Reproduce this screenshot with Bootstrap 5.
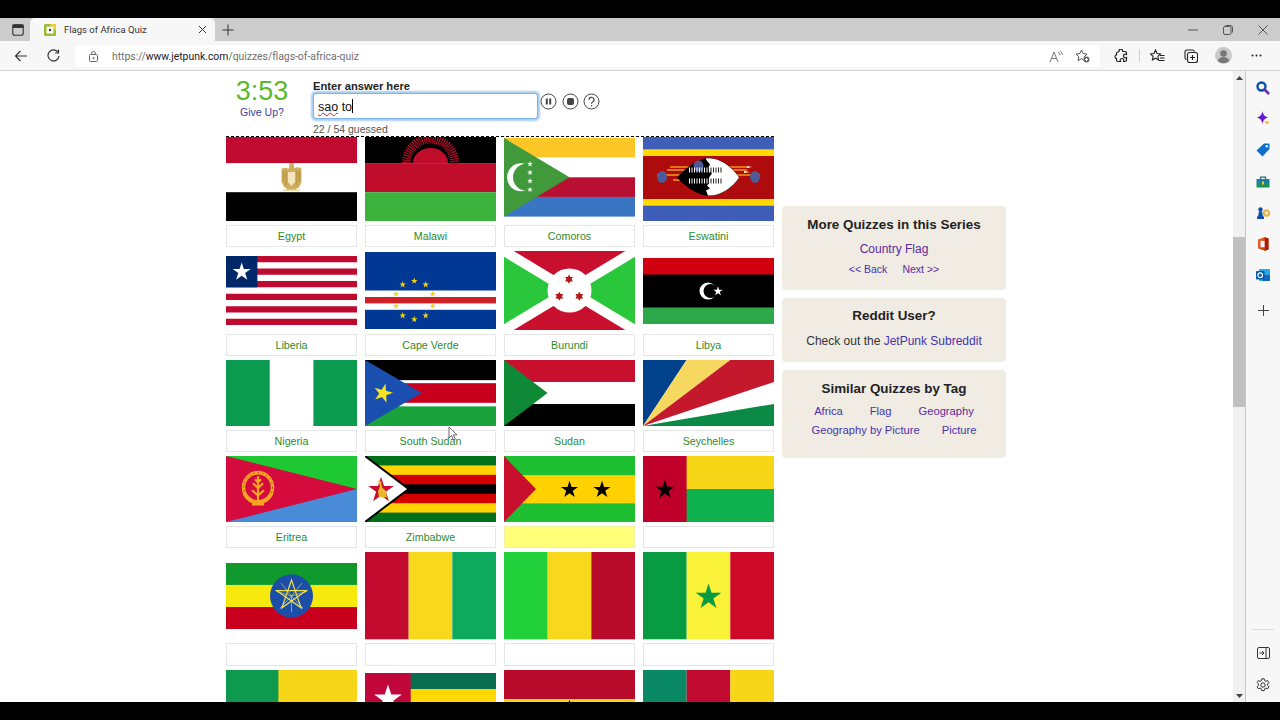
<!DOCTYPE html>
<html lang="en">
<head>
  <meta charset="UTF-8" />
  <meta name="viewport" content="width=device-width, initial-scale=1.0" />
  <title>Flags of Africa Quiz</title>
  <link href="https://cdn.jsdelivr.net/npm/bootstrap@5.3.0/dist/css/bootstrap.min.css" rel="stylesheet" />
  <style>
    html, body { height: 100%; overflow: hidden; }
    body { font-family: "Liberation Sans", Arial, sans-serif; background: #000; color: #222; }
    .black-band { height: 18px; background: #000; flex: none; }
    .tab-strip { height: 23px; background: #cccccc; flex: none; }
    .strip-ico { width: 30px; padding-left: 12px; }
    .browser-tab { width: 185px; height: 23px; background: #f7f7f7; border-radius: 5px 5px 0 0; padding: 0 8px 0 14px; font: 9.5px Roboto, sans-serif; color: #333; }
    .plus-ico { width: 26px; }
    .win-ico { width: 35px; height: 23px; }
    .tool-bar { height: 30px; background: #f7f7f7; border-bottom: 1px solid #d2d2d2; flex: none; padding-left: 4px; }
    .tool-ico { width: 33px; height: 29px; }
    .addr-bar { width: 1025px; height: 22px; margin: 1px 0 0 5px; background: #fff; border-radius: 4px; padding: 0 10px 0 14px; font: 10.4px Roboto, sans-serif; color: #6e6e6e; }
    .addr-bar b { font-weight: 400; color: #222; }
    .addr-lock { margin-right: 14px; }
    .addr-tools { gap: 12px; }
    .addr-right { width: 33px; }
    .tool-split { width: 1px; height: 13px; background: #d0d0d0; margin: 0 1px 0 2px; }
    .page-pane { background: #fff; min-width: 0; }
    .page-inner { padding-left: 226px; gap: 8px; }
    .quiz-col { width: 548px; flex: none; }
    .quiz-head { height: 66px; background: #fff; border-bottom: 1px dashed #000; z-index: 2; }
    .timer-col { width: 72px; margin-right: 15px; padding-top: 5px; text-align: center; }
    .timer-num { font-size: 27px; line-height: 30px; color: #5cb82f; }
    .give-up { font-size: 10.5px; line-height: 14px; margin-top: -1px; color: #4040a8; text-decoration: none; display: block; }
    .answer-lbl { font-size: 11.2px; font-weight: 700; line-height: 14px; padding-top: 8px; margin-bottom: 0; color: #222; }
    .answer-box.form-control { width: 225px; height: 26px; padding: 3px 4px; border: 1px solid #7fb4e6; border-radius: 3px; box-shadow: 0 0 2px 2px #a8cff0; font-size: 12.5px; line-height: 20px; color: #111; }
    .spell-mark { text-decoration: underline wavy #d02020 1px; }
    .caret-bar { display: inline-block; width: 1px; height: 14px; background: #000; vertical-align: -2px; }
    .guess-count { font-size: 10.5px; line-height: 13px; margin-top: 4px; color: #555; }
    .ctl-row { gap: 4.5px; padding-left: 2px; margin-top: 22px; }
    .flag-grid { display: grid; grid-template-columns: repeat(4, 131px); column-gap: 8px; margin-top: -3px; }
    .flag-img { display: block; width: 131px; }
    .flag-name { height: 22.4px; margin: 3.6px 0 4px; background: #fff; border: 1px solid #e6e6e6; font-size: 10.7px; color: #2e8b2e; }
    .flag-now { background: #ffff78; border-color: #f1f1a0; }
    .side-col { width: 224px; flex: none; padding-top: 135px; gap: 8px; }
    .side-panel { background: #f0ebe3; border-radius: 4px; text-align: center; color: #333; }
    .side-title { font-size: 13.4px; font-weight: 700; line-height: 16px; color: #222; margin: 0; }
    .side-panel a { text-decoration: none; color: #4535ad; }
    .side-panel a.seen { color: #5a2a9e; }
    .p-series { height: 84px; padding-top: 11px; }
    .p-reddit { height: 64px; padding-top: 10px; }
    .p-tags { height: 88px; padding-top: 11px; }
    .big-link { font-size: 12px; line-height: 14px; margin-top: 9px; }
    .small-links { font-size: 10.5px; line-height: 14px; margin-top: 6px; gap: 15px; }
    .reddit-line { font-size: 12px; line-height: 14px; margin-top: 10px; }
    .tag-line { font-size: 11.2px; line-height: 14px; gap: 27px; margin-top: 7px; }
    .tag-line + .tag-line { margin-top: 5px; gap: 22px; }
    .scroll-track { width: 12px; background: #f1f1f1; flex: none; padding-top: 166px; }
    .scroll-thumb { height: 170px; background: #c0c0c0; }
    .scroll-up { top: 5px; left: 3px; }
    .scroll-down { bottom: 4px; left: 3px; }
    .side-rail { width: 35px; flex: none; background: #f7f7f7; border-left: 1px solid #c8c8c8; padding-top: 1px; }
    .rail-ico { height: 31.3px; }
    .rail-low { height: 32px; }
    .rail-foot { padding-bottom: 1px; }
    .rail-line { width: 22px; height: 1px; background: #dcdcdc; margin-bottom: 7px; }
    .mouse-ptr { left: 448px; top: 355px; z-index: 3; }
  </style>
</head>
<body>
<svg class="d-none">
  <defs>
    <polygon id="st" points="0,-1 .2245,-.309 .951,-.309 .363,.118 .588,.809 0,.382 -.588,.809 -.363,.118 -.951,-.309 -.2245,-.309" />
    <g id="st6"><polygon points="0,-1 .866,.5 -.866,.5" /><polygon points="0,1 .866,-.5 -.866,-.5" /></g>
  </defs>
</svg>

<div class="d-flex flex-column vh-100">
  <div class="black-band"></div>

  <div class="tab-strip d-flex align-items-center">
    <div class="strip-ico d-flex">
      <svg width="12" height="12" viewBox="0 0 12 12" fill="none" stroke="#333" stroke-width="1.1"><rect x=".8" y=".8" width="10.4" height="10.4" rx="2"/><rect x="1" y="1" width="10" height="2.4" fill="#333"/></svg>
    </div>
    <div class="browser-tab d-flex align-items-center align-self-end">
      <svg width="12" height="12" viewBox="0 0 12 12" class="me-2 flex-none"><rect width="12" height="12" rx="1.5" fill="#9dbb2e"/><path d="M6 0h6v7z" fill="#f2cf2c"/><rect x="2.5" y="2.5" width="7" height="7" fill="#fff"/><circle cx="6" cy="6" r="1.2" fill="#333"/></svg>
      <span class="flex-grow-1">Flags of Africa Quiz</span>
      <svg width="9" height="9" viewBox="0 0 9 9" stroke="#333" stroke-width="1"><path d="M1 1l7 7M8 1l-7 7"/></svg>
    </div>
    <div class="plus-ico d-flex justify-content-center">
      <svg width="12" height="12" viewBox="0 0 12 12" stroke="#333" stroke-width="1"><path d="M6 .5v11M.5 6h11"/></svg>
    </div>
    <div class="ms-auto d-flex">
      <div class="win-ico d-flex align-items-center justify-content-center"><svg width="10" height="2" stroke="#555"><path d="M0 1h10"/></svg></div>
      <div class="win-ico d-flex align-items-center justify-content-center"><svg width="10" height="10" viewBox="0 0 10 10" fill="none" stroke="#555"><rect x=".5" y="1.5" width="7.5" height="8" rx="1.5"/><path d="M2.5.5h5a2 2 0 0 1 2 2v5"/></svg></div>
      <div class="win-ico d-flex align-items-center justify-content-center"><svg width="10" height="10" viewBox="0 0 10 10" stroke="#555"><path d="M.5.5l9 9M9.500.5l-9 9"/></svg></div>
    </div>
  </div>

  <div class="tool-bar d-flex align-items-center">
    <div class="tool-ico d-flex align-items-center justify-content-center">
      <svg width="14" height="12" viewBox="0 0 14 12" fill="none" stroke="#333" stroke-width="1.2"><path d="M13 6H1.500M6.500 1l-5 5 5 5"/></svg>
    </div>
    <div class="tool-ico d-flex align-items-center justify-content-center">
      <svg width="13" height="13" viewBox="0 0 13 13" fill="none" stroke="#333" stroke-width="1.2"><path d="M11.200 3.500A5.500 5.500 0 1 0 12 7"/><path d="M11.500.5v3.500H8"/></svg>
    </div>
    <div class="addr-bar d-flex align-items-center">
      <svg width="9" height="11" viewBox="0 0 9 11" fill="none" stroke="#666" class="addr-lock"><rect x=".5" y="3.500" width="8" height="7" rx="1"/><path d="M2.500 3.500V2.500a2 2 0 0 1 4 0v1"/><circle cx="4.500" cy="7" r=".6" fill="#666"/></svg>
      <span>https://<b>www.jetpunk.com</b>/quizzes/flags-of-africa-quiz</span>
      <span class="ms-auto d-flex align-items-center addr-tools">
        <svg width="14" height="13" viewBox="0 0 14 13" fill="none" stroke="#777"><path d="M1 12L5 2l4 10M2.500 8.500h5"/><path d="M9 2a3 3 0 0 1 2 3M11 .8a5 5 0 0 1 2.400 4"/></svg>
        <svg width="15" height="14" viewBox="0 0 15 14" fill="none" stroke="#555"><path d="M6.500 1l1.700 3.600 3.800.5-2.800 2.700.7 3.800-3.400-1.900-3.400 1.900.7-3.800L1 5.100l3.800-.5z"/><circle cx="11.500" cy="10.500" r="3" fill="#666" stroke="none"/><path d="M10 10.500h3M11.500 9v3" stroke="#fff"/></svg>
      </span>
    </div>
    <div class="tool-ico addr-right d-flex align-items-center justify-content-center ms-1">
      <svg width="14" height="14" viewBox="0 0 14 14" fill="none" stroke="#222" stroke-width="1.200"><path d="M5 1.500a1.800 1.800 0 0 1 3.500 0c0 .5 0 1 .5 1h2c1 0 1.500.5 1.500 1.500v1.500c-2-1-3 .5-3 1.500s1 2.500 3 1.500V11c0 1-.5 1.500-1.500 1.500H9.500c1-2-.5-3-1.500-3s-2.500 1-1.500 3H4C3 12.500 2.500 12 2.500 11V9.500C.5 9.500.5 6 2.500 6V4.500c0-1 .5-1.500 1.500-1.500s1.200-.8 1-1.500z"/></svg>
    </div>
    <div class="tool-split"></div>
    <div class="tool-ico d-flex align-items-center justify-content-center">
      <svg width="15" height="14" viewBox="0 0 15 14" fill="none" stroke="#222" stroke-width="1.100"><path d="M5.500 1l1.500 3.500 3.500.4-2.600 2.500.7 3.600-3.100-1.800-3.100 1.800.7-3.600L.5 4.900 4 4.500z"/><path d="M10 6.500h4.500M10 9h4.500M9 11.500h5.500"/></svg>
    </div>
    <div class="tool-ico d-flex align-items-center justify-content-center">
      <svg width="14" height="14" viewBox="0 0 14 14" fill="none" stroke="#222" stroke-width="1.100"><rect x="3.500" y="3.500" width="10" height="10" rx="2"/><path d="M8.500 6v5M6 8.500h5M2.500 10.500A2 2 0 0 1 1 8.500V3a2 2 0 0 1 2-2h5.500a2 2 0 0 1 2 1.500"/></svg>
    </div>
    <div class="tool-ico d-flex align-items-center justify-content-center ms-0">
      <svg width="17" height="17" viewBox="0 0 17 17"><circle cx="8.500" cy="8.500" r="8.500" fill="#c9c9c9"/><circle cx="8.500" cy="6.500" r="3.300" fill="#777"/><path d="M2.800 14c.8-3 3-4 5.700-4s4.900 1 5.700 4c-3 2.800-8.400 2.800-11.400 0z" fill="#777"/></svg>
    </div>
    <div class="tool-ico d-flex align-items-center justify-content-center">
      <svg width="11" height="3" viewBox="0 0 11 3" fill="#222"><circle cx="1.500" cy="1.500" r="1"/><circle cx="5.500" cy="1.500" r="1"/><circle cx="9.500" cy="1.500" r="1"/></svg>
    </div>
  </div>

  <div class="d-flex flex-grow-1 overflow-hidden">
    <div class="page-pane flex-grow-1 overflow-hidden position-relative">
      <div class="page-inner d-flex">
        <div class="quiz-col">
          <div class="quiz-head d-flex position-relative">
            <div class="timer-col">
              <div class="timer-num">3:53</div>
              <a class="give-up" href="#">Give Up?</a>
            </div>
            <div>
              <div class="answer-lbl">Enter answer here</div>
              <div class="answer-box form-control"><span class="spell-mark">sao</span> to<span class="caret-bar"></span></div>
              <div class="guess-count">22 / 54 guessed</div>
            </div>
            <div class="ctl-row d-flex align-items-start">
              <svg width="17" height="17" viewBox="0 0 17 17" fill="none" stroke="#444"><circle cx="8.500" cy="8.500" r="7.500"/><path d="M6.800 5.500v6M10.200 5.500v6" stroke-width="2"/></svg>
              <svg width="17" height="17" viewBox="0 0 17 17" fill="none" stroke="#444"><circle cx="8.500" cy="8.500" r="7.500"/><rect x="5.500" y="5.500" width="6" height="6" rx="1" fill="#444"/></svg>
              <svg width="17" height="17" viewBox="0 0 17 17" fill="none" stroke="#444"><circle cx="8.500" cy="8.500" r="7.500"/><path d="M6 6.800a2.500 2.500 0 1 1 3.600 2.200c-.8.400-1.100.8-1.100 1.700" stroke-width="1.200"/><circle cx="8.500" cy="12.800" r=".8" fill="#444" stroke="none"/></svg>
            </div>
          </div>

          <div class="flag-grid">
            <!-- row 1 -->
            <div class="d-flex flex-column">
              <div class="flex-grow-1 d-flex align-items-center">
                <svg class="flag-img" viewBox="0 0 131 87.300"><rect width="131" height="87.300" fill="#fff"/><rect width="131" height="29.100" fill="#c00a30"/><rect y="58.200" width="131" height="29.100" fill="#000"/><path d="M55.500 35c2-1.500 5-1.500 7 0l1-3-.5-2.500 2.500-.5h2l.5 3 .5 2.500c2-1.500 5-1.500 7 0v14l-3 5.500-2 .5v2.500h-10V54l-2-.5-3-5.500z" fill="#cfae5c"/><path d="M57.500 37v11M60 37v14M71 37v14M73.500 37v11" stroke="#a8873a" stroke-width=".8"/><path d="M62 38h7v10l-3.500 4-3.500-4z" fill="#f3e6bc"/><path d="M57 55.500h17v1.700H57z" fill="#eadcae"/></svg>
              </div>
              <div class="flag-name d-flex align-items-center justify-content-center">Egypt</div>
            </div>
            <div class="d-flex flex-column">
              <div class="flex-grow-1 d-flex align-items-center">
                <svg class="flag-img" viewBox="0 0 131 87.300"><rect width="131" height="29.100" fill="#000"/><circle cx="65.500" cy="29" r="24" fill="none" stroke="#b00c28" stroke-width="9" stroke-dasharray="1.200 1"/><path d="M48 29a17.500 15 0 0 1 35 0z" fill="#c00d2b"/><rect y="29.100" width="131" height="29.100" fill="#c00d2b"/><rect y="58.200" width="131" height="29.100" fill="#3cb33c"/></svg>
              </div>
              <div class="flag-name d-flex align-items-center justify-content-center">Malawi</div>
            </div>
            <div class="d-flex flex-column">
              <div class="flex-grow-1 d-flex align-items-center">
                <svg class="flag-img" viewBox="0 0 131 78.600"><rect width="131" height="19.650" fill="#fcc726"/><rect y="19.650" width="131" height="19.650" fill="#fff"/><rect y="39.300" width="131" height="19.650" fill="#b90f33"/><rect y="58.950" width="131" height="19.650" fill="#3a75c4"/><path d="M0 0L65.500 39.300 0 78.600z" fill="#409a3c"/><circle cx="17" cy="39.300" r="14" fill="#fff"/><circle cx="22.500" cy="39.300" r="13.500" fill="#409a3c"/><use href="#st" transform="translate(26 26) scale(3)" fill="#fff"/><use href="#st" transform="translate(26 34.500) scale(3)" fill="#fff"/><use href="#st" transform="translate(26 43) scale(3)" fill="#fff"/><use href="#st" transform="translate(26 51.700) scale(3)" fill="#fff"/></svg>
              </div>
              <div class="flag-name d-flex align-items-center justify-content-center">Comoros</div>
            </div>
            <div class="d-flex flex-column">
              <div class="flex-grow-1 d-flex align-items-center">
                <svg class="flag-img" viewBox="0 0 131 87.300"><rect width="131" height="87.300" fill="#3e5eb9"/><rect y="15.300" width="131" height="6.700" fill="#ffd900"/><rect y="65" width="131" height="6.700" fill="#ffd900"/><rect y="22" width="131" height="43" fill="#ae0c0c"/><path d="M24 36h29M27 33h27M14 41h103M30 46h30M70 36h34M70 33h34" stroke="#f0951a" stroke-width="1.500"/><ellipse cx="19" cy="43" rx="5" ry="6" fill="#4d5a96"/><ellipse cx="112" cy="43" rx="5" ry="6" fill="#4d5a96"/><path d="M104 32l5 1-5 1zM101 37l6 1-6 1z" fill="#fff"/><path d="M34 43.600C45 31 58 24 66 24c12 0 24 9 30 19.600C90 54 78 62 66 62 58 62 45 56 34 43.600z" fill="#000"/><path d="M63 24.500c12-2 26 8 33 19-7 11-20 19-31 18l-2-5 4-2-3-3 3-3-1-5 3-4-4-5 2-4-4-5z" fill="#fff"/><ellipse cx="55.500" cy="32" rx="5" ry="5.500" fill="#4d5a96"/><path d="M46 36h34M46 47h34" stroke="#fff" stroke-width="5" stroke-dasharray="1 1.500"/><path d="M65 36h15M65 47h15" stroke="#222" stroke-width="5" stroke-dasharray="1 1.500"/></svg>
              </div>
              <div class="flag-name d-flex align-items-center justify-content-center">Eswatini</div>
            </div>

            <!-- row 2 -->
            <div class="d-flex flex-column">
              <div class="flex-grow-1 d-flex align-items-center">
                <svg class="flag-img" viewBox="0 0 131 69"><rect width="131" height="69" fill="#fff"/><path d="M0 3.140h131M0 15.680h131M0 28.230h131M0 40.770h131M0 53.320h131M0 65.860h131" stroke="#bf0a30" stroke-width="6.270"/><rect width="31.400" height="31.400" fill="#002868"/><use href="#st" transform="translate(15.700 16) scale(9.500)" fill="#fff"/></svg>
              </div>
              <div class="flag-name d-flex align-items-center justify-content-center">Liberia</div>
            </div>
            <div class="d-flex flex-column">
              <div class="flex-grow-1 d-flex align-items-center">
                <svg class="flag-img" viewBox="0 0 131 77"><rect width="131" height="77" fill="#003893"/><rect y="38.500" width="131" height="19.300" fill="#fff"/><rect y="45" width="131" height="6.400" fill="#cf2027"/><g fill="#f7d116"><use href="#st" transform="translate(37.700 32.600) scale(3.500)"/><use href="#st" transform="translate(49.300 29) scale(3.500)"/><use href="#st" transform="translate(60.700 32.600) scale(3.500)"/><use href="#st" transform="translate(31 42) scale(3.500)"/><use href="#st" transform="translate(67.700 42) scale(3.500)"/><use href="#st" transform="translate(31 54) scale(3.500)"/><use href="#st" transform="translate(67.700 54) scale(3.500)"/><use href="#st" transform="translate(37.700 63.600) scale(3.500)"/><use href="#st" transform="translate(49.300 67.300) scale(3.500)"/><use href="#st" transform="translate(60.700 63.600) scale(3.500)"/></g></svg>
              </div>
              <div class="flag-name d-flex align-items-center justify-content-center">Cape Verde</div>
            </div>
            <div class="d-flex flex-column">
              <div class="flex-grow-1 d-flex align-items-center">
                <svg class="flag-img" viewBox="0 0 131 78.600" height="79" preserveAspectRatio="none"><rect width="131" height="78.600" fill="#c8102e"/><path d="M0 0L65.500 39.300 0 78.600zM131 0L65.500 39.300 131 78.600z" fill="#2ac73c"/><path d="M0 0L131 78.600M131 0L0 78.600" stroke="#fff" stroke-width="10"/><circle cx="65.500" cy="39.300" r="22" fill="#fff"/><g fill="#b51a1a"><use href="#st6" transform="translate(65 28) scale(4.500)"/><use href="#st6" transform="translate(55.300 45) scale(4.500)"/><use href="#st6" transform="translate(75.300 45) scale(4.500)"/></g></svg>
              </div>
              <div class="flag-name d-flex align-items-center justify-content-center">Burundi</div>
            </div>
            <div class="d-flex flex-column">
              <div class="flex-grow-1 d-flex align-items-center">
                <svg class="flag-img" viewBox="0 0 131 65.500" height="66" preserveAspectRatio="none"><rect width="131" height="65.500" fill="#000"/><rect width="131" height="16.400" fill="#d0000f"/><rect y="49.100" width="131" height="16.400" fill="#2da84a"/><circle cx="65" cy="32.750" r="8.500" fill="#fff"/><circle cx="67.500" cy="32.750" r="7" fill="#000"/><use href="#st" transform="translate(75 33) scale(5)" fill="#fff"/></svg>
              </div>
              <div class="flag-name d-flex align-items-center justify-content-center">Libya</div>
            </div>

            <!-- row 3 -->
            <div class="d-flex flex-column">
              <div class="flex-grow-1 d-flex align-items-center">
                <svg class="flag-img" viewBox="0 0 131 65.500" height="66" preserveAspectRatio="none"><rect width="131" height="65.500" fill="#0a9b4f"/><rect x="43.700" width="43.700" height="65.500" fill="#fff"/></svg>
              </div>
              <div class="flag-name d-flex align-items-center justify-content-center">Nigeria</div>
            </div>
            <div class="d-flex flex-column">
              <div class="flex-grow-1 d-flex align-items-center">
                <svg class="flag-img" viewBox="0 0 131 65.500" height="66" preserveAspectRatio="none"><rect width="131" height="65.500" fill="#fff"/><rect width="131" height="20" fill="#000"/><rect y="23" width="131" height="19.500" fill="#c8001e"/><rect y="46" width="131" height="19.500" fill="#1aa33c"/><path d="M0 0L56.700 32.750 0 65.500z" fill="#1a4fb0"/><use href="#st" transform="translate(18 33) rotate(15) scale(10)" fill="#f7e21c"/></svg>
              </div>
              <div class="flag-name d-flex align-items-center justify-content-center">South Sudan</div>
            </div>
            <div class="d-flex flex-column">
              <div class="flex-grow-1 d-flex align-items-center">
                <svg class="flag-img" viewBox="0 0 131 65.500" height="66" preserveAspectRatio="none"><rect width="131" height="65.500" fill="#fff"/><rect width="131" height="21.800" fill="#c8102e"/><rect y="43.700" width="131" height="21.800" fill="#000"/><path d="M0 0L43.600 32.750 0 65.500z" fill="#0e8a36"/></svg>
              </div>
              <div class="flag-name d-flex align-items-center justify-content-center">Sudan</div>
            </div>
            <div class="d-flex flex-column">
              <div class="flex-grow-1 d-flex align-items-center">
                <svg class="flag-img" viewBox="0 0 131 65.500" height="66" preserveAspectRatio="none"><rect width="131" height="65.500" fill="#fff"/><path d="M0 65.500V0h43.600z" fill="#00418c"/><path d="M0 65.500L43.600 0h43.700z" fill="#f6d860"/><path d="M0 65.500L87.300 0H131v21.800z" fill="#c4182c"/><path d="M0 65.500L131 43.600v21.900z" fill="#0a8a44"/></svg>
              </div>
              <div class="flag-name d-flex align-items-center justify-content-center">Seychelles</div>
            </div>

            <!-- row 4 -->
            <div class="d-flex flex-column">
              <div class="flex-grow-1 d-flex align-items-center">
                <svg class="flag-img" viewBox="0 0 131 65.500" height="66" preserveAspectRatio="none"><rect width="131" height="32.750" fill="#1ec832"/><rect y="32.750" width="131" height="32.750" fill="#4a8bd8"/><path d="M0 0L131 32.750 0 65.500z" fill="#d40b3c"/><circle cx="32" cy="31" r="14.500" fill="none" stroke="#f5a623" stroke-width="3.500"/><circle cx="32" cy="31" r="14.500" fill="none" stroke="#d40b3c" stroke-width=".8" stroke-dasharray="1.500 3"/><path d="M18 37a15 15 0 0 0 28 0" fill="none" stroke="#f5a623" stroke-width="3"/><path d="M32 20v26M32 39l-6-5M32 39l6-5M32 32l-5-5M32 32l5-5M32 26l-3-3M32 26l3-3M26 48h12" stroke="#f5a623" stroke-width="2.200" fill="none"/></svg>
              </div>
              <div class="flag-name d-flex align-items-center justify-content-center">Eritrea</div>
            </div>
            <div class="d-flex flex-column">
              <div class="flex-grow-1 d-flex align-items-center">
                <svg class="flag-img" viewBox="0 0 131 65.500" height="66" preserveAspectRatio="none"><rect width="131" height="65.500" fill="#00701a"/><rect y="9.360" width="131" height="46.800" fill="#ffd200"/><rect y="18.710" width="131" height="28.100" fill="#d40000"/><rect y="28.070" width="131" height="9.360" fill="#000"/><path d="M0 0L43.600 32.750 0 65.500z" fill="#fff"/><path d="M0 0L43.600 32.750 0 65.500" fill="none" stroke="#000" stroke-width="2"/><use href="#st" transform="translate(16 34) scale(13.500)" fill="#c8102e"/><path d="M13 24l3 1 1 6 4 4 1 6h-8l-1-6 2-5z" fill="#e8b92c"/></svg>
              </div>
              <div class="flag-name d-flex align-items-center justify-content-center">Zimbabwe</div>
            </div>
            <div class="d-flex flex-column">
              <div class="flex-grow-1 d-flex align-items-center">
                <svg class="flag-img" viewBox="0 0 131 65.500" height="66" preserveAspectRatio="none"><rect width="131" height="65.500" fill="#1ec032"/><rect y="19" width="131" height="28" fill="#ffd100"/><path d="M0 0L32 32.750 0 65.500z" fill="#c8102e"/><use href="#st" transform="translate(65.500 33.500) scale(9)" fill="#000"/><use href="#st" transform="translate(98 33.500) scale(9)" fill="#000"/></svg>
              </div>
              <div class="flag-name flag-now d-flex align-items-center justify-content-center"></div>
            </div>
            <div class="d-flex flex-column">
              <div class="flex-grow-1 d-flex align-items-center">
                <svg class="flag-img" viewBox="0 0 131 65.500" height="66" preserveAspectRatio="none"><rect width="131" height="32.750" fill="#f7d618"/><rect y="32.750" width="131" height="32.750" fill="#0fb14e"/><rect width="43.600" height="65.500" fill="#c0002a"/><use href="#st" transform="translate(22 33.500) scale(10)" fill="#000"/></svg>
              </div>
              <div class="flag-name d-flex align-items-center justify-content-center"></div>
            </div>

            <!-- row 5 -->
            <div class="d-flex flex-column">
              <div class="flex-grow-1 d-flex align-items-center">
                <svg class="flag-img" viewBox="0 0 131 65.500" height="66" preserveAspectRatio="none"><rect width="131" height="21.800" fill="#109a2e"/><rect y="21.800" width="131" height="21.900" fill="#f7e90c"/><rect y="43.700" width="131" height="21.800" fill="#c8001e"/><circle cx="65.500" cy="32.750" r="21.500" fill="#1c4ea8"/><path d="M65.500 17l9.700 27.500-24.500-17h29.600l-24.500 17z" fill="none" stroke="#f2e34c" stroke-width="1.200"/><path d="M65.500 32.750V49M65.500 32.750L50 28M65.500 32.750L81 28M65.500 32.750L55 20M65.500 32.750L76 20M65.500 32.750L54 45M65.500 32.750L77 45" stroke="#f2e34c" stroke-width=".6"/></svg>
              </div>
              <div class="flag-name d-flex align-items-center justify-content-center"></div>
            </div>
            <div class="d-flex flex-column">
              <div class="flex-grow-1 d-flex align-items-center">
                <svg class="flag-img" viewBox="0 0 3 2"><rect width="1" height="2" fill="#c20b2e"/><rect x="1" width="1" height="2" fill="#f7d81c"/><rect x="2" width="1" height="2" fill="#0daa5e"/></svg>
              </div>
              <div class="flag-name d-flex align-items-center justify-content-center"></div>
            </div>
            <div class="d-flex flex-column">
              <div class="flex-grow-1 d-flex align-items-center">
                <svg class="flag-img" viewBox="0 0 3 2"><rect width="1" height="2" fill="#22d03c"/><rect x="1" width="1" height="2" fill="#f7d81c"/><rect x="2" width="1" height="2" fill="#b80a2a"/></svg>
              </div>
              <div class="flag-name d-flex align-items-center justify-content-center"></div>
            </div>
            <div class="d-flex flex-column">
              <div class="flex-grow-1 d-flex align-items-center">
                <svg class="flag-img" viewBox="0 0 131 87.300"><rect width="43.700" height="87.300" fill="#089c42"/><rect x="43.700" width="43.700" height="87.300" fill="#f9f238"/><rect x="87.300" width="43.700" height="87.300" fill="#cf0a28"/><use href="#st" transform="translate(65.500 45) scale(13.500)" fill="#089c42"/></svg>
              </div>
              <div class="flag-name d-flex align-items-center justify-content-center"></div>
            </div>

            <!-- row 6, cut off by the window -->
            <div class="d-flex flex-column">
              <div class="flex-grow-1 d-flex align-items-center">
                <svg class="flag-img" viewBox="0 0 131 87.300"><rect width="131" height="43.650" fill="#f7d618"/><rect y="43.650" width="131" height="43.650" fill="#c8102e"/><rect width="52.400" height="87.300" fill="#0e9a4e"/></svg>
              </div>
            </div>
            <div class="d-flex flex-column">
              <div class="flex-grow-1 d-flex align-items-center">
                <svg class="flag-img" viewBox="0 0 131 81"><rect width="131" height="81" fill="#096e4e"/><rect y="16" width="131" height="16" fill="#ffd800"/><rect y="48" width="131" height="16" fill="#ffd800"/><rect width="45.700" height="48" fill="#c0063a"/><use href="#st" transform="translate(23 26) scale(14.500)" fill="#fff"/></svg>
              </div>
            </div>
            <div class="d-flex flex-column">
              <div class="flex-grow-1 d-flex align-items-center">
                <svg class="flag-img" viewBox="0 0 131 87.300"><rect width="131" height="29.100" fill="#b80a2a"/><rect y="29.100" width="131" height="29.100" fill="#f7d618"/><rect y="58.200" width="131" height="29.100" fill="#0a8a44"/><use href="#st" transform="translate(65.500 43.650) scale(14)" fill="#000"/></svg>
              </div>
            </div>
            <div class="d-flex flex-column">
              <div class="flex-grow-1 d-flex align-items-center">
                <svg class="flag-img" viewBox="0 0 3 2"><rect width="1" height="2" fill="#0a8a64"/><rect x="1" width="1" height="2" fill="#c00a30"/><rect x="2" width="1" height="2" fill="#f7d618"/></svg>
              </div>
            </div>
          </div>
        </div>

        <div class="side-col d-flex flex-column">
          <div class="side-panel p-series">
            <h5 class="side-title">More Quizzes in this Series</h5>
            <div class="big-link"><a class="seen" href="#">Country Flag</a></div>
            <div class="small-links d-flex justify-content-center"><a href="#">&lt;&lt; Back</a><a class="seen" href="#">Next &gt;&gt;</a></div>
          </div>
          <div class="side-panel p-reddit">
            <h5 class="side-title">Reddit User?</h5>
            <div class="reddit-line">Check out the <a href="#">JetPunk Subreddit</a></div>
          </div>
          <div class="side-panel p-tags">
            <h5 class="side-title">Similar Quizzes by Tag</h5>
            <div class="tag-line d-flex justify-content-center"><a href="#">Africa</a><a href="#">Flag</a><a class="seen" href="#">Geography</a></div>
            <div class="tag-line d-flex justify-content-center"><a href="#">Geography by Picture</a><a href="#">Picture</a></div>
          </div>
        </div>
      </div>

      <svg class="mouse-ptr position-absolute" width="10" height="15" viewBox="0 0 10 15"><path d="M1 1v11l2.500-2.500 2 4.500 1.800-.8-2-4.300H9z" fill="#fff" stroke="#444" stroke-width=".8"/></svg>
    </div>

    <div class="scroll-track position-relative">
      <svg class="scroll-up position-absolute" width="7" height="4" viewBox="0 0 7 4" fill="#444"><path d="M3.500 0L7 4H0z"/></svg>
      <div class="scroll-thumb"></div>
      <svg class="scroll-down position-absolute" width="7" height="4" viewBox="0 0 7 4" fill="#444"><path d="M0 0h7L3.500 4z"/></svg>
    </div>

    <div class="side-rail d-flex flex-column align-items-center">
      <div class="rail-ico d-flex align-items-center"><svg width="14" height="14" viewBox="0 0 14 14" fill="none"><circle cx="5.500" cy="5.500" r="4" stroke="#0b4fa8" stroke-width="2.400"/><path d="M8.500 8.500l4.500 4.500" stroke="#6a2db0" stroke-width="2.600"/></svg></div>
      <div class="rail-ico d-flex align-items-center"><svg width="14" height="15" viewBox="0 0 14 15"><path d="M6.500 0c.7 4 2.200 5.600 6 6.500-3.800.9-5.300 2.500-6 6.500-.7-4-2.200-5.600-6-6.500 3.800-.9 5.300-2.500 6-6.500z" fill="#6a18d8"/><path d="M11 9c.2 1.500.8 2.100 3 2.500-2.200.4-2.800 1-3 2.500-.2-1.500-.8-2.100-3-2.500 2.200-.4 2.800-1 3-2.500z" fill="#f0a830"/></svg></div>
      <div class="rail-ico d-flex align-items-center"><svg width="14" height="14" viewBox="0 0 14 14"><path d="M8 .5h4.500a1 1 0 0 1 1 1V6L6.500 13.500.5 7.500z" fill="#0c6fd0"/><circle cx="10.800" cy="3.200" r="1.200" fill="#f7f7f7"/></svg></div>
      <div class="rail-ico d-flex align-items-center"><svg width="14" height="14" viewBox="0 0 14 14"><path d="M4.500 4V2.200h5V4" fill="none" stroke="#1a6e8e" stroke-width="1.200"/><rect x=".5" y="4" width="13" height="4" fill="#1a7f9c"/><rect x=".5" y="8" width="13" height="4.500" fill="#1e8e5a"/><rect x="6" y="6.500" width="2" height="3" fill="#f0c040"/></svg></div>
      <div class="rail-ico d-flex align-items-center"><svg width="15" height="14" viewBox="0 0 15 14"><circle cx="10.500" cy="7" r="3.800" fill="#e8b64a"/><circle cx="10.500" cy="7" r="1.400" fill="#f7f7f7"/><circle cx="4.500" cy="3.500" r="2.200" fill="#0c4fa8"/><path d="M3 5.500h3l1 5H2zM1 10.500h7v2.500H1z" fill="#0c4fa8"/></svg></div>
      <div class="rail-ico d-flex align-items-center"><svg width="12" height="14" viewBox="0 0 12 14"><path d="M1 2.800L7.800.3 11.500 1.500v11L7.800 13.700 1 11.200z" fill="#d83b01"/><path d="M1 2.800L7.800 .3v2L3.500 3.800v6.500L1 11.200z" fill="#e8582a"/><rect x="3.500" y="3.800" width="4.300" height="6.500" fill="#f7f7f7"/><path d="M7.800 0.300L11.500 1.500v11l-3.700 1.200z" fill="#a81c0a"/></svg></div>
      <div class="rail-ico d-flex align-items-center"><svg width="14" height="14" viewBox="0 0 14 14"><rect x="3" y="1" width="11" height="12" rx="1" fill="#28a8ea"/><rect x="7" y="7" width="7" height="6" fill="#0f6cbd"/><rect y="3" width="8.500" height="8.500" rx="1" fill="#0a5ba8"/><circle cx="4.200" cy="7.200" r="2.300" fill="none" stroke="#fff" stroke-width="1.200"/></svg></div>
      <div class="rail-ico d-flex align-items-center mt-1"><svg width="11" height="11" viewBox="0 0 11 11" stroke="#444"><path d="M5.500 0v11M0 5.500h11"/></svg></div>
      <div class="mt-auto rail-foot d-flex flex-column align-items-center">
        <div class="rail-line"></div>
        <div class="rail-low d-flex align-items-center"><svg width="13" height="12" viewBox="0 0 13 12" fill="none" stroke="#333"><rect x=".5" y=".5" width="12" height="11" rx="1.500"/><path d="M9 .5v11"/><path d="M2.500 6h4M5 4l2 2-2 2"/></svg></div>
        <div class="rail-low d-flex align-items-center"><svg width="14" height="14" viewBox="0 0 14 14" fill="none" stroke="#333"><circle cx="7" cy="7" r="2.200"/><path d="M5.800.8h2.400l.4 1.800 1.400.7 1.700-.7 1.200 2-1.300 1.300v1.600l1.300 1.300-1.200 2-1.700-.7-1.400.7-.4 1.800H5.800l-.4-1.800-1.400-.7-1.700.7-1.200-2 1.300-1.300V5.900L1.100 4.600l1.200-2 1.700.7 1.400-.7z"/></svg></div>
      </div>
    </div>
  </div>

  <div class="black-band"></div>
</div>

<script src="https://cdn.jsdelivr.net/npm/bootstrap@5.3.0/dist/js/bootstrap.bundle.min.js"></script>
</body>
</html>
